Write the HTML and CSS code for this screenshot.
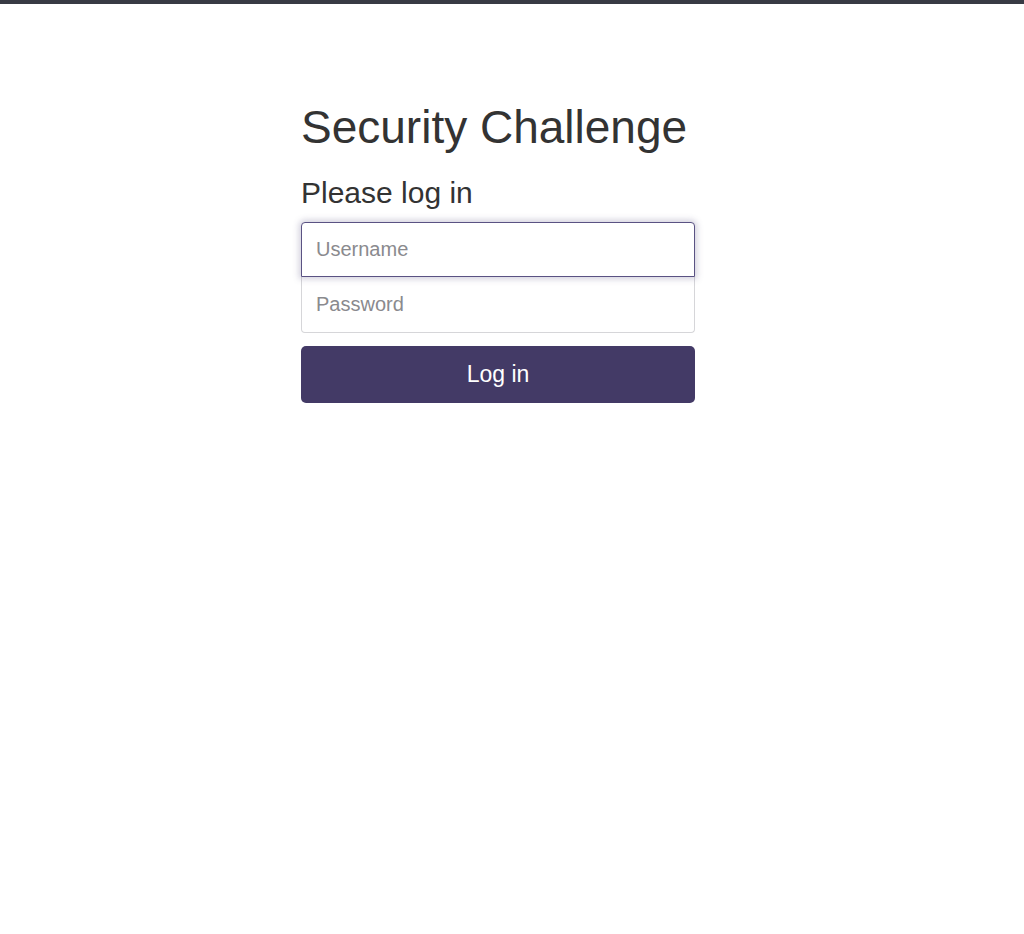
FILE: index.html
```html
<!DOCTYPE html>
<html>
<head>
<meta charset="utf-8">
<link rel="stylesheet" href="styles.css">
</head>
<body>
<div class="topbar"></div>
<main class="page">
  <form class="signin">
    <h1 class="title">Security Challenge</h1>
    <h3 class="subtitle">Please log in</h3>
    <input class="field field-top" type="text" placeholder="Username">
    <input class="field field-bottom" type="password" placeholder="Password">
    <button class="btn" type="button">Log in</button>
  </form>
</main>
</body>
</html>
```
FILE: styles.css
```css
html, body {
  margin: 0;
  padding: 0;
  background: #fff;
  font-family: "Liberation Sans", Arial, sans-serif;
  color: #333;
}
.topbar {
  height: 4px;
  background: #383a44;
}
.page {
  display: flex;
  justify-content: center;
  padding-right: 28px;
  padding-top: 97px;
}
.signin {
  width: 394px;
  display: flex;
  flex-direction: column;
}
.title {
  font-size: 46px;
  font-weight: 400;
  margin: 0 0 22px 0;
  line-height: 52px;
}
.subtitle {
  font-size: 30px;
  font-weight: 400;
  margin: 0 0 11px 0;
  line-height: 36px;
}
.field {
  box-sizing: border-box;
  height: 56px;
  width: 100%;
  font-family: "Liberation Sans", Arial, sans-serif;
  font-size: 20px;
  padding: 0 14px;
  border: 1px solid #d6d6d9;
  background: #fff;
  color: #333;
  outline: none;
}
.field::placeholder {
  color: #8a8a8e;
}
.field-top {
  height: 55px;
  border-radius: 4px 4px 0 0;
  border-color: #5a5283;
  box-shadow: 0 0 6px 2px rgba(90, 82, 131, 0.28);
  position: relative;
  z-index: 1;
}
.field-bottom {
  border-radius: 0 0 4px 4px;
  border-top: none;
}
.btn {
  margin-top: 13px;
  height: 57px;
  border: none;
  border-radius: 5px;
  background: #433a66;
  color: #fff;
  font-family: "Liberation Sans", Arial, sans-serif;
  font-size: 23px;
}
```
